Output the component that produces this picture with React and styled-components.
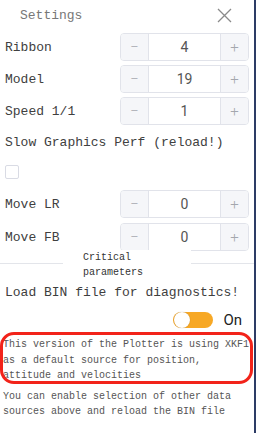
import React from "react";
import styled, { createGlobalStyle } from "styled-components";

const Global = createGlobalStyle`
  html, body { margin: 0; padding: 0; background: #fff; }
  body { font-family: "Liberation Mono", "DejaVu Sans Mono", monospace; }
  * { box-sizing: border-box; }
`;

const Panel = styled.div`
  width: 256px;
  height: 433px;
  border-right: 2px solid #2d3c66;
  display: flex;
  flex-direction: column;
  overflow: hidden;
`;

const Header = styled.div`
  height: 33px;
  display: flex;
  align-items: center;
  justify-content: space-between;
  padding: 0 22px 3px 20px;
  color: #777;
  font-size: 13px;
`;

const Close = styled.button`
  border: none;
  background: none;
  padding: 0;
  width: 15px;
  height: 15px;
  display: flex;
`;

const Rows = styled.div`
  display: flex;
  flex-direction: column;
  padding: 0 5px 0 5px;
`;

const Row = styled.div`
  display: flex;
  align-items: center;
  justify-content: space-between;
  height: 28px;
  margin-top: ${(p) => p.$mt || 0}px;
  color: #404040;
  font-size: 13px;
`;

const Stepper = styled.div`
  width: 129px;
  height: 28px;
  display: grid;
  grid-template-columns: 28px 1fr 28px;
  border: 1px solid #e1e3ea;
  border-radius: 4px;
  overflow: hidden;
`;

const StepBtn = styled.div`
  background: #f5f6f9;
  color: #a4a7ae;
  display: flex;
  align-items: center;
  justify-content: center;
  font-family: Roboto, "Liberation Sans", sans-serif;
  font-size: 15px;
  font-weight: 300;
  border-left: ${(p) => (p.$right ? "1px solid #e1e3ea" : "none")};
  border-right: ${(p) => (p.$right ? "none" : "1px solid #e1e3ea")};
`;

const StepValue = styled.div`
  display: flex;
  align-items: center;
  justify-content: center;
  color: #555;
  font-family: Roboto, "Liberation Sans", sans-serif;
  font-size: 14px;
`;

const Line = styled.div`
  margin-top: ${(p) => p.$mt || 0}px;
  line-height: 20px;
  color: #404040;
  font-size: 13px;
`;

const Check = styled.div`
  margin-top: 12px;
  width: 14px;
  height: 14px;
  border: 1px solid #d9dbe4;
  border-radius: 2px;
`;

const Section = styled.div`
  position: relative;
  margin-top: 12px;
  border-top: 1px solid #e3e5ea;
  padding: 20px 0 0 0;
`;

const Legend = styled.div`
  position: absolute;
  top: -14px;
  left: 63px;
  width: 128px;
  padding: 0 0 0 20px;
  background: #fff;
  font-size: 10px;
  line-height: 15px;
  color: #333;
`;

const LoadText = styled.div`
  padding-left: 5px;
  line-height: 18px;
  font-size: 13px;
  color: #3e3e3e;
`;

const ToggleRow = styled.div`
  margin-top: 10px;
  display: flex;
  align-items: center;
  justify-content: flex-end;
  gap: 10px;
  padding-right: 12px;
  height: 16px;
`;

const Track = styled.div`
  width: 40px;
  height: 16px;
  border-radius: 8px;
  background: #f7a825;
  position: relative;
`;

const Knob = styled.div`
  position: absolute;
  left: 1px;
  top: 0;
  width: 16px;
  height: 16px;
  border-radius: 50%;
  background: #fff;
  box-shadow: 0 0 1px rgba(0, 0, 0, 0.3);
`;

const OnLabel = styled.span`
  font-family: Roboto, "Liberation Sans", sans-serif;
  font-size: 15px;
  color: #222;
`;

const Notice = styled.div`
  position: relative;
  margin-top: 9px;
  padding: 0 0 0 3px;
`;

const Para = styled.p`
  margin: ${(p) => p.$mt || 0}px 0 0 0;
  font-size: 10px;
  line-height: 15.5px;
  color: #555;
`;

const RedRing = styled.div`
  position: absolute;
  left: 0;
  top: -5px;
  width: 253px;
  height: 52px;
  border: 3.5px solid #f2231a;
  border-radius: 14px;
  pointer-events: none;
`;

function NumberField({ label, value, mt }) {
  return (
    <Row $mt={mt}>
      <span>{label}</span>
      <Stepper>
        <StepBtn>−</StepBtn>
        <StepValue>{value}</StepValue>
        <StepBtn $right>+</StepBtn>
      </Stepper>
    </Row>
  );
}

export default function App() {
  return (
    <>
      <Global />
      <Panel>
        <Header>
          <span>Settings</span>
          <Close aria-label="close">
            <svg width="15" height="15" viewBox="0 0 15 15">
              <path d="M1 1 L14 14 M14 1 L1 14" stroke="#8a8a8a" strokeWidth="1.3" fill="none" />
            </svg>
          </Close>
        </Header>
        <Rows>
          <NumberField label="Ribbon" value="4" />
          <NumberField label="Model" value="19" mt={4} />
          <NumberField label="Speed 1/1" value="1" mt={4} />
          <Line $mt={8}>Slow Graphics Perf (reload!)</Line>
          <Check />
          <NumberField label="Move LR" value="0" mt={11} />
          <NumberField label="Move FB" value="0" mt={5} />
        </Rows>
        <Section>
          <Legend>
            Critical
            <br />
            parameters
          </Legend>
          <LoadText>Load BIN file for diagnostics!</LoadText>
          <ToggleRow>
            <Track>
              <Knob />
            </Track>
            <OnLabel>On</OnLabel>
          </ToggleRow>
          <Notice>
            <Para>
              This version of the Plotter is using XKF1
              <br />
              as a default source for position,
              <br />
              attitude and velocities
            </Para>
            <Para $mt={5}>
              You can enable selection of other data
              <br />
              sources above and reload the BIN file
            </Para>
            <RedRing />
          </Notice>
        </Section>
      </Panel>
    </>
  );
}
